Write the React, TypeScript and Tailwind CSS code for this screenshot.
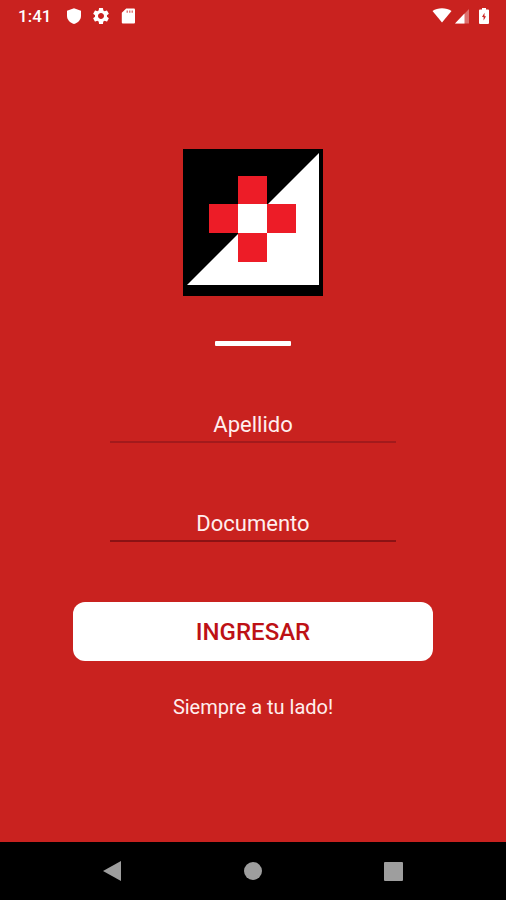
import { useState } from "react";
import type { FormEvent } from "react";
import { MdSettings } from "react-icons/md";

function StatusBar() {
  return (
    <header className="flex h-8 items-center justify-between pl-[18px] pr-4">
      <div className="flex items-center">
        <span className="w-[48px] text-[17px] leading-6 font-medium">1:41</span>
        <svg className="mr-[9px] h-4 w-4" viewBox="0 0 16 16" fill="currentColor">
          <path d="M8 0.2 15 2.800v5.200c0 3.700-3 6.800-7 8C4 14.800 1 11.700 1 8V2.800z" />
        </svg>
        <MdSettings className="mr-[9px] h-5 w-5" />
        <svg className="h-4 w-4" viewBox="0 0 16 16">
          <path
            d="M6.200 0.500H14a1 1 0 0 1 1 1v13a1 1 0 0 1-1 1H2.800a1 1 0 0 1-1-1V4.800z"
            fill="currentColor"
          />
          <path
            d="M6.500 2.500H8v2.300H6.500zM9 2.500h1.500v2.300H9zM11.500 2.500H13v2.300h-1.500z"
            fill="#c9221f"
            fillOpacity="0.6"
          />
        </svg>
      </div>
      <div className="flex items-center">
        <svg className="mr-[2px] h-4 w-5" viewBox="0 0 20 16" fill="currentColor">
          <path d="M10 14.500 0.500 3C5.500-0.800 14.500-0.800 19.500 3z" />
        </svg>
        <svg className="mr-2 h-4 w-4" viewBox="0 0 16 16" fill="currentColor">
          <path d="M15 1v14.500H1z" fillOpacity="0.35" />
          <path d="M10.500 5.600v9.900H1z" />
        </svg>
        <svg className="h-4 w-3" viewBox="0 0 12 16">
          <path
            d="M4 0h4v1.500h2a1 1 0 0 1 1 1V15a1 1 0 0 1-1 1H2a1 1 0 0 1-1-1V2.500a1 1 0 0 1 1-1h2z"
            fill="currentColor"
          />
          <path d="M6.500 4.800 4 9h1.600v3.500L8 8.200H6.500z" fill="#c9221f" />
        </svg>
      </div>
    </header>
  );
}

function Logo() {
  return (
    <svg
      className="h-[147px] w-[140px]"
      viewBox="0 0 140 147"
      role="img"
      aria-label="Logo"
    >
      <path d="M0 0h140v147H0z" fill="#000" />
      <path d="M136 4v132H4z" fill="#fff" />
      <path d="M55 55h29v29H55z" fill="#fff" />
      <path
        d="M55 27h29v28H55zM26 55h29v29H26zM84 55h29v29H84zM55 84h29v29H55z"
        fill="#ed1c27"
      />
    </svg>
  );
}

function NavigationBar() {
  return (
    <nav className="flex h-[58px] items-center justify-center gap-[116px] bg-black text-[#9e9e9e]">
      <button type="button" aria-label="Atrás">
        <svg className="h-6 w-6" viewBox="0 0 24 24" fill="currentColor">
          <path d="M20 2v20L2 12z" />
        </svg>
      </button>
      <button type="button" aria-label="Inicio">
        <svg className="h-6 w-6" viewBox="0 0 24 24" fill="currentColor">
          <circle cx="12" cy="12" r="9" />
        </svg>
      </button>
      <button type="button" aria-label="Recientes">
        <svg className="h-6 w-6" viewBox="0 0 24 24" fill="currentColor">
          <rect x="3" y="3" width="19" height="19" rx="1" />
        </svg>
      </button>
    </nav>
  );
}

export default function App() {
  const [lastName, setLastName] = useState("");
  const [documentId, setDocumentId] = useState("");

  const handleSubmit = (event: FormEvent) => {
    event.preventDefault();
  };

  return (
    <div className="flex min-h-screen flex-col bg-[#c9221f] font-['Roboto',sans-serif] text-white">
      <StatusBar />

      <main className="flex flex-1 flex-col items-center px-[73px] pt-[117px]">
        <Logo />
        <div className="mt-[45px] h-[5px] w-[76px] rounded-[1px] bg-white" />

        {/* Login form */}
        <form className="mt-[61px] flex w-full flex-col" onSubmit={handleSubmit}>
          <div className="flex flex-col gap-[63px] px-[37px]">
            <input
              className="h-9 w-full border-b-2 border-[#a31a1c] bg-transparent text-center text-[22px] placeholder:text-[#ffeeee] focus:outline-none"
              type="text"
              aria-label="Apellido"
              placeholder="Apellido"
              value={lastName}
              onChange={(e) => setLastName(e.target.value)}
            />
            <input
              className="h-9 w-full border-b-2 border-[#8b1214] bg-transparent text-center text-[22px] placeholder:text-[#ffeeee] focus:outline-none"
              type="text"
              aria-label="Documento"
              placeholder="Documento"
              value={documentId}
              onChange={(e) => setDocumentId(e.target.value)}
            />
          </div>
          <button
            className="mt-[60px] h-[59px] w-full rounded-xl bg-white text-[24px] font-medium text-[#bd1115]"
            type="submit"
          >
            INGRESAR
          </button>
        </form>

        <p className="mt-8 text-[20px] leading-7 text-[#ffeeee]">
          Siempre a tu lado!
        </p>
      </main>

      <NavigationBar />
    </div>
  );
}
